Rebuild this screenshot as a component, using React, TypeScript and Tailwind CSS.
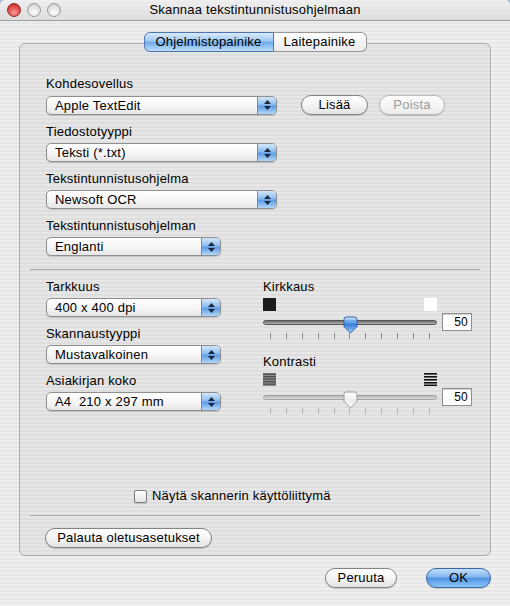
import React from "react";

const stripes =
  "bg-[repeating-linear-gradient(to_bottom,#efefef_0px,#efefef_2px,#e7e7e7_2px,#e7e7e7_4px)]";

function Arrows() {
  return (
    <span className="flex w-[19px] flex-col items-center justify-center gap-[2px] border-l border-[#6a8fbd] bg-[linear-gradient(#d3e7fa,#8dbcee_45%,#5e9be3_55%,#b3d8f8)]">
      <svg width="7" height="4" viewBox="0 0 7 4">
        <path d="M3.5 0 L7 4 L0 4 Z" fill="#1b2740" />
      </svg>
      <svg width="7" height="4" viewBox="0 0 7 4">
        <path d="M0 0 L7 0 L3.5 4 Z" fill="#1b2740" />
      </svg>
    </span>
  );
}

function Popup({ value, w }: { value: string; w: string }) {
  return (
    <div
      className={`${w} flex h-[19px] overflow-hidden rounded-[5px] border border-[#8e8e8e] bg-linear-to-b from-white via-[#f7f7f7] to-[#e6e6e6] shadow-[0_1px_1px_rgba(0,0,0,0.15)]`}
    >
      <span className="flex-1 whitespace-pre pl-[8px] text-[13px] leading-[17px] text-black">{value}</span>
      <Arrows />
    </div>
  );
}

function Field({ label, value, w }: { label: string; value: string; w: string }) {
  return (
    <div className="flex flex-col">
      <span className="h-[16px] text-[13px] leading-[16px]">{label}</span>
      <div className="mt-[3px]">
        <Popup value={value} w={w} />
      </div>
    </div>
  );
}

function Pill({
  children,
  w,
  disabled,
  blue,
}: {
  children: React.ReactNode;
  w: string;
  disabled?: boolean;
  blue?: boolean;
}) {
  const skin = blue
    ? "border-[#3c68a6] bg-[linear-gradient(#c3e0fb,#7fb5ee_45%,#4f93e3_52%,#8cc6f8)] text-black"
    : disabled
      ? "border-[#b9b9b9] bg-linear-to-b from-[#fbfbfb] to-[#ececec] text-[#9d9d9d]"
      : "border-[#838383] bg-linear-to-b from-white via-[#f4f4f4] to-[#e3e3e3] text-black";
  return (
    <div
      className={`${w} ${skin} flex h-[20px] items-center justify-center rounded-full border text-[13px] leading-[18px] shadow-[0_1px_1px_rgba(0,0,0,0.18)]`}
    >
      {children}
    </div>
  );
}

function Thumb({ active }: { active: boolean }) {
  const id = active ? "thumbBlue" : "thumbGray";
  return (
    <svg width="15" height="18" viewBox="0 0 15 18" className="absolute left-[80px] top-[3px]">
      <defs>
        <linearGradient id={id} x1="0" y1="0" x2="0" y2="1">
          {active ? (
            <>
              <stop offset="0" stopColor="#d9ecff" />
              <stop offset="0.3" stopColor="#72aef0" />
              <stop offset="0.5" stopColor="#3e82dc" />
              <stop offset="1" stopColor="#a6d3fb" />
            </>
          ) : (
            <>
              <stop offset="0" stopColor="#ffffff" />
              <stop offset="0.5" stopColor="#ececec" />
              <stop offset="1" stopColor="#fafafa" />
            </>
          )}
        </linearGradient>
      </defs>
      <path
        d="M1 3.5 Q1 1 3.5 1 H11.5 Q14 1 14 3.5 V10.5 L7.5 17 L1 10.5 Z"
        fill={`url(#${id})`}
        stroke={active ? "#2d5d9e" : "#9a9a9a"}
        strokeWidth="1"
      />
      {active && (
        <>
          <line x1="2" y1="5" x2="13" y2="5" stroke="#4f8ad8" strokeWidth="0.8" />
          <line x1="2" y1="8" x2="13" y2="8" stroke="#3b78cc" strokeWidth="0.8" />
        </>
      )}
    </svg>
  );
}

function Slider({ active }: { active: boolean }) {
  return (
    <>
      <div className="mt-[2px] flex h-[18px] items-center">
        <div className="relative flex h-[18px] w-[174px] items-center">
          <div
            className={
              active
                ? "h-[5px] w-full rounded-full border border-[#555] bg-linear-to-b from-[#6a6a6a] to-[#b5b5b5]"
                : "h-[5px] w-full rounded-full border border-[#a5a5a5] bg-linear-to-b from-[#b8b8b8] to-[#dcdcdc]"
            }
          />
          <Thumb active={active} />
        </div>
        <div className="ml-[5px] h-[18px] w-[30px] border border-[#8f8f8f] bg-white pr-[3px] text-right text-[12px] leading-[16px] shadow-[inset_0_1px_1px_rgba(0,0,0,0.2)]">
          50
        </div>
      </div>
      <div className="mt-[2px] flex w-[174px] justify-between px-[7px]">
        {Array.from({ length: 11 }).map((_, i) => (
          <span key={i} className={active ? "h-[6px] w-px bg-[#8a8a8a]" : "h-[6px] w-px bg-[#b4b4b4]"} />
        ))}
      </div>
    </>
  );
}

function LineIcon({ dark }: { dark: boolean }) {
  return (
    <svg width="13" height="13" viewBox="0 0 13 13">
      {dark ? (
        [0, 3, 6, 9, 11.5].map((y) => <rect key={y} x="0" y={y} width="13" height="1.6" fill="#111" />)
      ) : (
        <>
          <rect x="0" y="0" width="13" height="13" fill="#8c8c8c" />
          {[0.5, 3, 5.5, 8, 10.5].map((y) => (
            <rect key={y} x="0" y={y} width="13" height="1.3" fill="#4e4e4e" />
          ))}
        </>
      )}
    </svg>
  );
}

function Light({ red }: { red?: boolean }) {
  return (
    <span
      className={
        red
          ? "h-[14px] w-[14px] rounded-full border border-[#8c2a2a] bg-[radial-gradient(circle_at_50%_70%,#ff9a9a,#e2494a_55%,#b5282a)]"
          : "h-[14px] w-[14px] rounded-full border border-[#9a9a9a] bg-[radial-gradient(circle_at_50%_70%,#ffffff,#e2e2e2_55%,#bdbdbd)]"
      }
    />
  );
}

export default function App() {
  return (
    <div className="h-[606px] w-[510px] bg-[#3f6fa6] font-['Liberation_Sans',Arial,sans-serif] tracking-[0.2px] text-black">
      <div className={`flex h-full flex-col rounded-t-[5px] ${stripes}`}>
        {/* title bar */}
        <div className="grid h-[21px] grid-cols-[1fr_auto_1fr] items-center border-b border-[#9d9d9d] bg-linear-to-b from-[#f0f0f0]/60 to-[#d6d6d6]/60">
          <div className="flex gap-[6px] pl-[7px]">
            <Light red />
            <Light />
            <Light />
          </div>
          <span className="text-[13px] leading-[16px]">Skannaa tekstintunnistusohjelmaan</span>
          <span />
        </div>

        <div className="px-[19px] pt-[11px]">
          {/* tabs */}
          <div className="relative z-10 -mb-[9px] flex justify-center">
            <div className="flex h-[20px] w-[130px] items-center justify-center rounded-l-[6px] border border-[#4c76b0] bg-[linear-gradient(#d9ebfc,#9dc8f2_45%,#6faaec_52%,#bde0fc)] text-[13px] leading-[18px]">
              Ohjelmistopainike
            </div>
            <div className="flex h-[20px] w-[93px] items-center justify-center rounded-r-[6px] border border-l-0 border-[#969696] bg-linear-to-b from-white to-[#ebebeb] text-[13px] leading-[18px]">
              Laitepainike
            </div>
          </div>

          {/* group box */}
          <div className="flex h-[513px] flex-col rounded-[6px] border border-[#adadad] bg-black/[0.035] pt-[32px]">
            <div className="flex flex-col gap-[9px] pl-[26px]">
              <div className="flex flex-col">
                <span className="h-[16px] text-[13px] leading-[16px]">Kohdesovellus</span>
                <div className="mt-[3px] flex items-center">
                  <Popup value="Apple TextEdit" w="w-[231px]" />
                  <div className="ml-[24px]">
                    <Pill w="w-[67px]">Lisää</Pill>
                  </div>
                  <div className="ml-[11px]">
                    <Pill w="w-[66px]" disabled>
                      Poista
                    </Pill>
                  </div>
                </div>
              </div>
              <Field label="Tiedostotyyppi" value="Teksti (*.txt)" w="w-[231px]" />
              <Field label="Tekstintunnistusohjelma" value="Newsoft OCR" w="w-[231px]" />
              <Field label="Tekstintunnistusohjelman" value="Englanti" w="w-[175px]" />
            </div>

            <div className="mx-[10px] mt-[13px] h-px bg-[#a9a9a9]" />

            <div className="mt-[9px] flex pl-[26px]">
              <div className="flex w-[175px] flex-col gap-[9px]">
                <Field label="Tarkkuus" value="400 x 400 dpi" w="w-[175px]" />
                <Field label="Skannaustyyppi" value="Mustavalkoinen" w="w-[175px]" />
                <Field label="Asiakirjan koko" value="A4  210 x 297 mm" w="w-[175px]" />
              </div>
              <div className="ml-[42px] flex flex-col">
                <span className="h-[16px] text-[13px] leading-[16px]">Kirkkaus</span>
                <div className="mt-[3px] flex w-[174px] justify-between">
                  <span className="h-[13px] w-[13px] bg-[#1c1c1c]" />
                  <span className="h-[13px] w-[13px] bg-white" />
                </div>
                <Slider active />
                <span className="mt-[15px] h-[16px] text-[13px] leading-[16px]">Kontrasti</span>
                <div className="mt-[3px] flex w-[174px] justify-between">
                  <LineIcon dark={false} />
                  <LineIcon dark />
                </div>
                <Slider active={false} />
              </div>
            </div>

            <div className="mt-auto flex h-[16px] items-center pl-[114px]">
              <span className="h-[13px] w-[13px] rounded-[2px] border border-[#7d7d7d] bg-linear-to-b from-white to-[#e3e3e3] shadow-[0_1px_1px_rgba(0,0,0,0.15)]" />
              <span className="ml-[5px] text-[13px] leading-[16px]">Näytä skannerin käyttöliittymä</span>
            </div>

            <div className="mx-[10px] mt-[11px] h-px bg-[#a9a9a9]" />

            <div className="mb-[7px] mt-[12px] pl-[25px]">
              <Pill w="w-[167px]">Palauta oletusasetukset</Pill>
            </div>
          </div>
        </div>

        {/* dialog buttons */}
        <div className="mt-[12px] flex justify-end gap-[29px] pr-[19px]">
          <Pill w="w-[72px]">Peruuta</Pill>
          <Pill w="w-[65px]" blue>
            OK
          </Pill>
        </div>
      </div>
    </div>
  );
}
